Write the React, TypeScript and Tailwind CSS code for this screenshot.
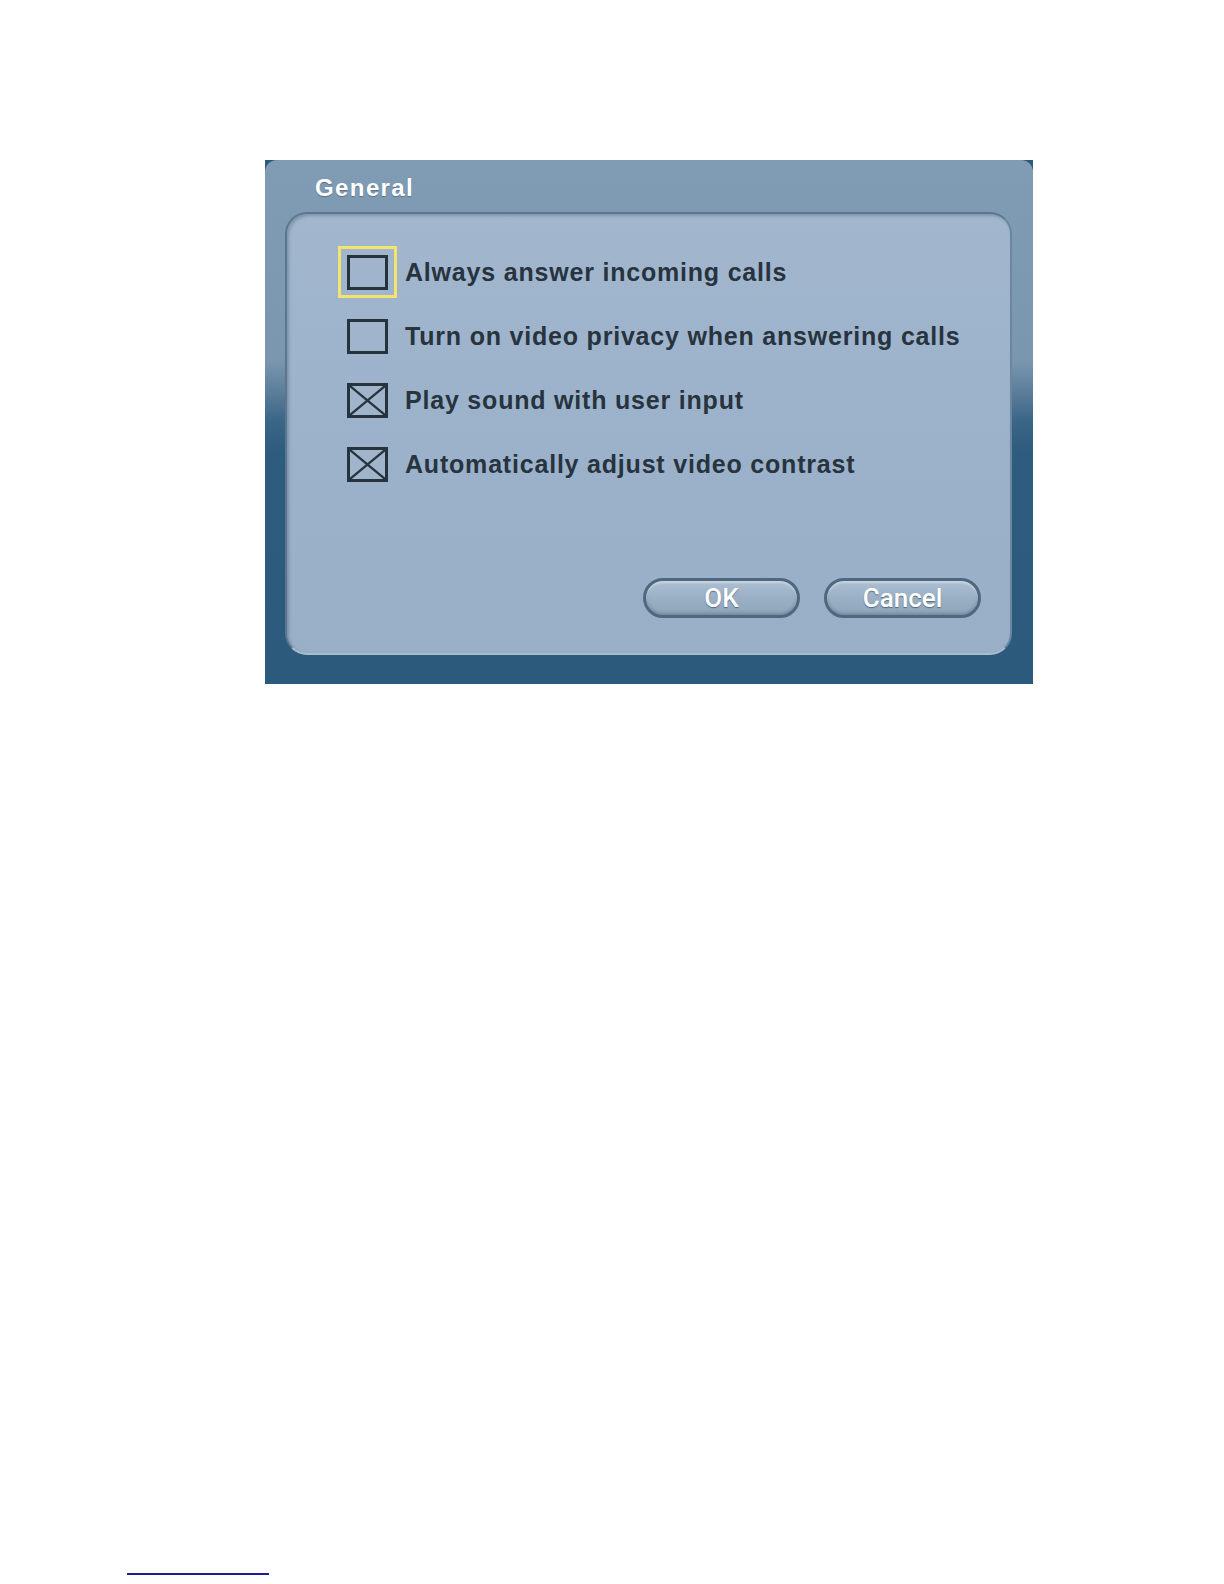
import React from "react";

const rows = [
  { label: "Always answer incoming calls", checked: false, focused: true },
  { label: "Turn on video privacy when answering calls", checked: false, focused: false },
  { label: "Play sound with user input", checked: true, focused: false },
  { label: "Automatically adjust video contrast", checked: true, focused: false },
];

function CheckBox({ checked }: { checked: boolean }) {
  return (
    <div className="relative w-[41px] h-[35px] border-[3px] border-[#26323c] bg-[#a0b5cc]">
      {checked && (
        <svg className="absolute inset-0 w-full h-full" viewBox="0 0 35 29" preserveAspectRatio="none">
          <line x1="0" y1="0" x2="35" y2="29" stroke="#26323c" strokeWidth="2.2" />
          <line x1="35" y1="0" x2="0" y2="29" stroke="#26323c" strokeWidth="2.2" />
        </svg>
      )}
    </div>
  );
}

function PillButton({ label }: { label: string }) {
  return (
    <div className="w-[157px] h-[40px] rounded-full border-[3px] border-[#4e687e] bg-[linear-gradient(to_bottom,#adc0d3_0%,#9cb1c6_45%,#8ea5bb_100%)] shadow-[inset_0_2px_2px_rgba(255,255,255,0.35),inset_0_-2px_3px_rgba(40,60,80,0.25)] flex items-center justify-center">
      <span className="text-white text-[26px] font-medium leading-none [font-family:Roboto,'Liberation_Sans',sans-serif] [text-shadow:0_1px_1px_rgba(40,60,80,0.6)]">
        {label}
      </span>
    </div>
  );
}

export default function App() {
  return (
    <div className="w-[1224px] h-[1584px] bg-white flex flex-col [font-family:'Liberation_Sans',Arial,sans-serif]">
      <div className="ml-[265px] mt-[160px] w-[768px] h-[524px] bg-[#2c5a7c] flex">
        <div className="flex-1 rounded-[12px] flex flex-col bg-[linear-gradient(to_bottom,#809cb4_0%,#7b97af_38%,#5d7f9b_44%,#3a6586_50%,#2e5c7e_56%,#2c5a7c_100%)]">
          <div className="h-[52px] pl-[50px] pt-[16px]">
            <span className="text-white font-bold text-[24px] leading-none tracking-[1.4px] [text-shadow:0_1px_1px_rgba(50,70,90,0.5)]">
              General
            </span>
          </div>
          <div className="ml-[20px] mr-[21px] h-[443px] rounded-[22px] border-2 border-[#5b7790] border-b-[#a8bccb] border-r-[#6b879e] bg-[linear-gradient(to_bottom,#a2b7ce_0%,#9cb2ca_50%,#99afc8_100%)] shadow-[inset_2px_2px_3px_rgba(60,85,110,0.35)] flex flex-col">
            <div className="pt-[26px] pl-[51px] flex flex-col">
              {rows.map((r) => (
                <div key={r.label} className="h-[64px] flex items-center">
                  <div
                    className={
                      r.focused
                        ? "w-[59px] h-[52px] border-[3px] border-[#f3e46c] flex items-center justify-center"
                        : "w-[59px] h-[52px] border-[3px] border-transparent flex items-center justify-center"
                    }
                  >
                    <CheckBox checked={r.checked} />
                  </div>
                  <span className="ml-[8px] text-[25px] font-bold tracking-[0.8px] text-[#27333e] leading-none">
                    {r.label}
                  </span>
                </div>
              ))}
            </div>
            <div className="mt-auto mb-[35px] mr-[29px] flex justify-end gap-[24px]">
              <PillButton label="OK" />
              <PillButton label="Cancel" />
            </div>
          </div>
        </div>
      </div>
      <div className="ml-[127px] mt-[889px] w-[142px] h-[2px] bg-[#1c1c94]" />
    </div>
  );
}
